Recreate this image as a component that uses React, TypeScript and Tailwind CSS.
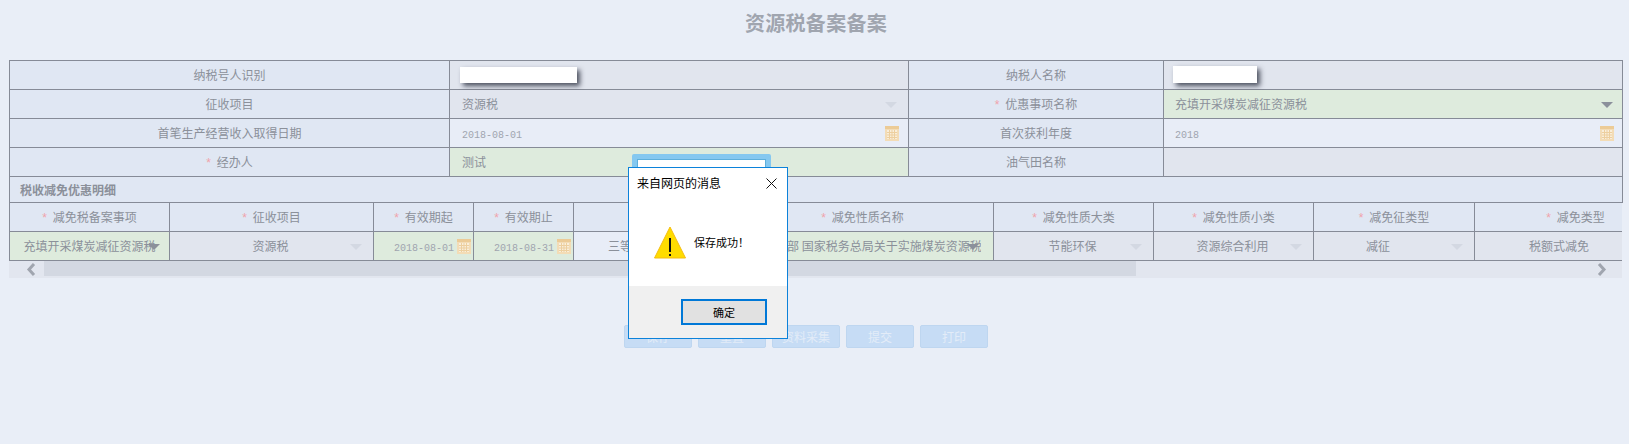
import type { ReactNode } from "react";

const cellBorder = "border border-[#868b97] h-[29px] p-0 relative font-normal";

function Star() {
  return <span className="text-[#f0a3ab] mr-[6px] font-['Liberation_Sans']">*</span>;
}

function Arrow({ right, top = 12, dark }: { right: number; top?: number; dark?: boolean }) {
  return (
    <span
      className={`absolute w-0 h-0 border-x-[6px] border-t-[6px] border-x-transparent ${dark ? "border-t-[#8b909b]" : "border-t-[#d3d8e2]"}`}
      style={{ right, top }}
    />
  );
}

function Calendar({ right, top = 7 }: { right: number; top?: number }) {
  return (
    <svg className="absolute" style={{ right, top }} width="14" height="15" viewBox="0 0 14 15">
      <rect x="0" y="0" width="14" height="15" fill="#f3dcb6" />
      <rect x="0" y="0" width="14" height="3" fill="#eccb96" />
      <rect x="2" y="4" width="10" height="9" fill="#f9eeda" />
      <path d="M2 6.5h10M2 9h10M2 11.5h10M4.5 4v9M7 4v9M9.5 4v9" stroke="#edcf9f" strokeWidth="1" fill="none" />
    </svg>
  );
}

function Label({ children, star }: { children: ReactNode; star?: boolean }) {
  return (
    <td className={`${cellBorder} bg-[#e0e7f3] text-center`}>
      {star && <Star />}
      {children}
    </td>
  );
}

function Blank({ className }: { className: string }) {
  return <span className={`absolute block bg-white shadow-[3px_3px_5px_rgba(50,55,70,0.85)] ${className}`} />;
}

function DateText({ children }: { children: ReactNode }) {
  return <span className="font-['Liberation_Mono'] text-[10px] text-[#a0a5af]">{children}</span>;
}

function HeadCell({ children, star = true }: { children: ReactNode; star?: boolean }) {
  return (
    <th className={`${cellBorder} bg-[#e0e7f3] text-center`}>
      {star && <Star />}
      {children}
    </th>
  );
}

const detailHeads = ["减免税备案事项", "征收项目", "有效期起", "有效期止", "", "减免性质名称", "减免性质大类", "减免性质小类", "减免征类型", "减免类型"];

function SaveDialog() {
  return (
    <div className="absolute left-[628px] top-[167px] w-[160px] h-[172px] flex flex-col bg-white border border-[#0c82da] text-black">
      <div className="flex items-center justify-between h-[27px] pl-[8px] pr-[10px] mt-[1px] text-[12px]">
        <span>来自网页的消息</span>
        <svg width="11" height="11" viewBox="0 0 11 11" className="mt-[1px]">
          <path d="M0.5 0.5l10 10M10.5 0.5l-10 10" stroke="#111" strokeWidth="1" fill="none" />
        </svg>
      </div>
      <div className="flex-1 flex items-start pl-[25px] pt-[30px] gap-[8px] text-[11px]">
        <svg width="32" height="33" viewBox="0 0 32 33">
          <path d="M16 1L31.5 32H0.5Z" fill="#ffdc00" stroke="#f4bd10" strokeWidth="1" />
          <rect x="15" y="12" width="2" height="14" fill="#111" />
          <rect x="15" y="28" width="2" height="2" fill="#111" />
        </svg>
        <span className="mt-[8px]">保存成功！</span>
      </div>
      <div className="h-[52px] bg-[#f0f0f0] pl-[52px] pt-[13px]">
        <button className="w-[86px] h-[26px] bg-[#e1e1e1] border-2 border-[#0078d7] text-[11px] text-black">确定</button>
      </div>
    </div>
  );
}

export default function App() {
  return (
    <div className="relative h-[444px] overflow-hidden bg-[#e9eef7] text-[12px] text-[#8b909a] font-['Noto_Sans_CJK_SC',sans-serif]">
      <div className="h-[60px] pt-[10px] pl-[3px] text-center text-[20px] leading-[28px] tracking-[0.3px] font-bold text-[#a0a5af] font-['Liberation_Serif','Noto_Sans_CJK_SC',serif]">
        资源税备案备案
      </div>

      <div className="ml-[9px] w-[1613px]">
        <table className="table-fixed border-collapse w-[1613px]">
          <colgroup>
            <col className="w-[440px]" />
            <col className="w-[459px]" />
            <col className="w-[255px]" />
            <col className="w-[459px]" />
          </colgroup>
          <tbody>
            <tr>
              <Label>纳税号人识别</Label>
              <td className={`${cellBorder} bg-[#e1e5ee]`}>
                <Blank className="left-[10px] top-[6px] w-[117px] h-[16px]" />
              </td>
              <Label>纳税人名称</Label>
              <td className={`${cellBorder} bg-[#e1e5ee]`}>
                <Blank className="left-[9px] top-[5px] w-[84px] h-[17px]" />
              </td>
            </tr>
            <tr>
              <Label>征收项目</Label>
              <td className={`${cellBorder} bg-[#e1e5ee] pl-[12px]`}>
                资源税
                <Arrow right={11} />
              </td>
              <Label star>优惠事项名称</Label>
              <td className={`${cellBorder} bg-[#deebdd] pl-[11px]`}>
                充填开采煤炭减征资源税
                <Arrow right={9} dark />
              </td>
            </tr>
            <tr>
              <Label>首笔生产经营收入取得日期</Label>
              <td className={`${cellBorder} bg-[#e8edf7] pl-[12px]`}>
                <DateText>2018-08-01</DateText>
                <Calendar right={9} />
              </td>
              <Label>首次获利年度</Label>
              <td className={`${cellBorder} bg-[#e8edf7] pl-[11px]`}>
                <DateText>2018</DateText>
                <Calendar right={8} />
              </td>
            </tr>
            <tr>
              <Label star>经办人</Label>
              <td className={`${cellBorder} bg-[#deebdd] pl-[12px]`}>测试</td>
              <Label>油气田名称</Label>
              <td className={`${cellBorder} bg-[#e1e5ee]`} />
            </tr>
            <tr>
              <td colSpan={4} className="border border-[#868b97] h-[26px] bg-[#e0e7f3] pl-[10px] font-bold">
                税收减免优惠明细
              </td>
            </tr>
          </tbody>
        </table>

        <div className="w-[1613px] overflow-hidden">
          <table className="table-fixed border-collapse w-[1667px] -mt-px">
            <colgroup>
              <col className="w-[160px]" />
              <col className="w-[204px]" />
              <col className="w-[100px]" />
              <col className="w-[100px]" />
              <col className="w-[158px]" />
              <col className="w-[262px]" />
              <col className="w-[160px]" />
              <col className="w-[160px]" />
              <col className="w-[161px]" />
              <col className="w-[202px]" />
            </colgroup>
            <thead>
              <tr>
                {detailHeads.map((head, i) => (
                  <HeadCell key={i} star={head !== ""}>
                    {head}
                  </HeadCell>
                ))}
              </tr>
            </thead>
            <tbody>
              <tr className="text-center">
                <td className={`${cellBorder} bg-[#deebdd]`}>
                  <span className="block whitespace-nowrap overflow-hidden">充填开采煤炭减征资源税</span>
                  <Arrow right={9} dark />
                </td>
                <td className={`${cellBorder} bg-[#e1e5ee] pr-[2px]`}>
                  资源税
                  <Arrow right={11} />
                </td>
                <td className={`${cellBorder} bg-[#deebdd] text-left pl-[20px]`}>
                  <DateText>2018-08-01</DateText>
                  <Calendar right={2} />
                </td>
                <td className={`${cellBorder} bg-[#deebdd] text-left pl-[20px]`}>
                  <DateText>2018-08-31</DateText>
                  <Calendar right={2} />
                </td>
                <td className={`${cellBorder} bg-[#e8edf7] text-left pl-[34px]`}>三等</td>
                <td className={`${cellBorder} bg-[#deebdd] text-left pl-[31px] pr-[12px]`}>
                  <span className="block whitespace-nowrap overflow-hidden">财政部 国家税务总局关于实施煤炭资源税改革的通知</span>
                  <Arrow right={14} dark />
                </td>
                <td className={`${cellBorder} bg-[#e1e5ee] pr-[2px]`}>
                  节能环保
                  <Arrow right={11} />
                </td>
                <td className={`${cellBorder} bg-[#e1e5ee] pr-[2px]`}>
                  资源综合利用
                  <Arrow right={11} />
                </td>
                <td className={`${cellBorder} bg-[#e1e5ee] pr-[32px]`}>
                  减征
                  <Arrow right={11} />
                </td>
                <td className={`${cellBorder} bg-[#e1e5ee] pr-[33px]`}>税额式减免</td>
              </tr>
            </tbody>
          </table>
        </div>

        <div className="flex h-[17px] bg-[#e2e6ef]">
          <div className="w-[35px] flex items-center pl-[17px]">
            <svg width="10" height="13" viewBox="0 0 10 13">
              <path d="M8 1L3 6.5L8 12" stroke="#a0a5af" strokeWidth="3" fill="none" />
            </svg>
          </div>
          <div className="w-[1092px] h-[15px] bg-[#d3d8e2]" />
          <div className="flex-1 flex items-center justify-end pr-[15px]">
            <svg width="10" height="13" viewBox="0 0 10 13">
              <path d="M2 1L7 6.5L2 12" stroke="#a0a5af" strokeWidth="3" fill="none" />
            </svg>
          </div>
        </div>
      </div>

      <div className="flex gap-[6px] ml-[624px] mt-[47px]">
        {["保存", "重置", "资料采集", "提交", "打印"].map((label) => (
          <button
            key={label}
            className="w-[68px] h-[23px] rounded-[2px] bg-[#c6dcf5] border border-[#bed6f0] text-[12px] text-[#e3ecf8]"
          >
            {label}
          </button>
        ))}
      </div>

      <div className="absolute left-[632px] top-[154px] w-[139px] h-[30px] rounded-[2px] bg-white border-[5px] border-[#85c8f0] shadow-[inset_0_0_0_1px_#5fb0dc]" />
      <SaveDialog />
    </div>
  );
}
